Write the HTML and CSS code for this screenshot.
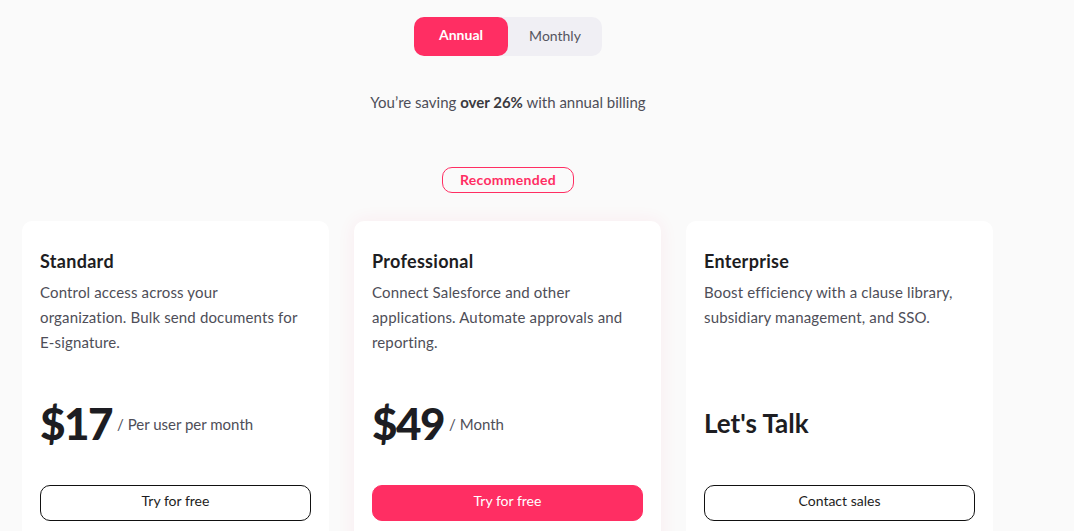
FILE: index.html
```html
<!DOCTYPE html>
<html lang="en">
<head>
  <meta charset="UTF-8" />
  <meta name="viewport" content="width=device-width, initial-scale=1.0" />
  <title>Pricing</title>
  <link rel="stylesheet" href="styles.css">
</head>
<body>
  <main class="pricing">
    <div class="toggle">
      <button class="toggle-btn active">Annual</button>
      <button class="toggle-btn">Monthly</button>
    </div>

    <p class="saving">You’re saving <strong>over 26%</strong> with annual billing</p>

    <div class="badge-row">
      <span class="badge">Recommended</span>
    </div>

    <div class="plans">
      <div class="plan">
        <h3 class="plan-name">Standard</h3>
        <p class="plan-desc">Control access across your organization. Bulk send documents for E-signature.</p>
        <div class="price-row">
          <span class="price">$17</span>
          <span class="per">/ Per user per month</span>
        </div>
        <button class="plan-btn">Try for free</button>
      </div>

      <div class="plan featured">
        <h3 class="plan-name">Professional</h3>
        <p class="plan-desc">Connect Salesforce and other applications. Automate approvals and reporting.</p>
        <div class="price-row">
          <span class="price">$49</span>
          <span class="per">/ Month</span>
        </div>
        <button class="plan-btn primary">Try for free</button>
      </div>

      <div class="plan">
        <h3 class="plan-name">Enterprise</h3>
        <p class="plan-desc">Boost efficiency with a clause library, subsidiary management, and SSO.</p>
        <div class="price-row">
          <span class="talk">Let's Talk</span>
        </div>
        <button class="plan-btn">Contact sales</button>
      </div>
    </div>
  </main>
</body>
</html>
```

FILE: styles.css
```css
body {
  background-color: #fafafa;
  color: #4a4a55;
  font-family: 'Lato', 'Helvetica Neue', Arial, sans-serif;
  margin: 0;
  padding: 0;
}

.pricing {
  width: 972px;
  margin-left: 22px;
  padding-top: 17px;
  display: flex;
  flex-direction: column;
  align-items: center;
}

.toggle {
  display: flex;
  width: 188px;
  height: 39px;
  background-color: #f0eff4;
  border-radius: 10px;
}

.toggle-btn {
  flex: 1;
  border: none;
  background: none;
  border-radius: 10px;
  padding: 0 0 3px;
  font-family: inherit;
  font-size: 14px;
  color: #555560;
  cursor: pointer;
}

.toggle-btn.active {
  background-color: #ff2e63;
  color: #ffffff;
  font-weight: 700;
  padding-bottom: 5px;
}

.saving {
  margin: 36px 0 0;
  font-size: 15px;
  line-height: 20px;
  color: #4e4e58;
}

.saving strong {
  color: #3a3a40;
}

.badge-row {
  margin-top: 55px;
}

.badge {
  display: inline-flex;
  align-items: center;
  justify-content: center;
  width: 130px;
  height: 24px;
  padding-bottom: 2px;
  box-sizing: content-box;
  height: 22px;
  border: 1px solid #ff2e63;
  border-radius: 10px;
  color: #ff2e63;
  font-size: 14px;
  font-weight: 700;
  letter-spacing: 0.3px;
}

.plans {
  display: grid;
  grid-template-columns: repeat(3, 307px);
  gap: 25px;
  margin-top: 28px;
  align-self: stretch;
}

.plan {
  background-color: #ffffff;
  border-radius: 10px;
  padding: 28px 18px 40px;
}

.plan.featured {
  box-shadow: 0 0 18px rgba(255, 46, 99, 0.07);
}

.plan-name {
  margin: 0;
  font-size: 18px;
  line-height: 24px;
  font-weight: 700;
  letter-spacing: 0.3px;
  color: #1d1d22;
}

.plan-desc {
  max-width: 264px;
  margin: 7px 0 0;
  min-height: 75px;
  font-size: 15px;
  line-height: 25px;
  letter-spacing: 0.15px;
  color: #4e4e58;
}

.price-row {
  display: flex;
  align-items: center;
  height: 60px;
  margin-top: 38px;
}

.price {
  font-size: 44px;
  font-weight: 900;
  letter-spacing: -1.5px;
  color: #1d1d22;
}

.per {
  margin-left: 5px;
  margin-top: 2px;
  font-size: 15px;
  color: #4e4e58;
}

.talk {
  font-size: 26px;
  font-weight: 700;
  color: #1d1d22;
}

.plan-btn {
  display: block;
  width: 100%;
  height: 36px;
  margin-top: 32px;
  padding: 0 0 5px;
  border: 1px solid #111111;
  border-radius: 10px;
  background-color: #ffffff;
  font-family: inherit;
  font-size: 14px;
  color: #1d1d22;
  cursor: pointer;
}

.plan-btn.primary {
  background-color: #ff2e63;
  border-color: #ff2e63;
  color: #ffffff;
}
```
